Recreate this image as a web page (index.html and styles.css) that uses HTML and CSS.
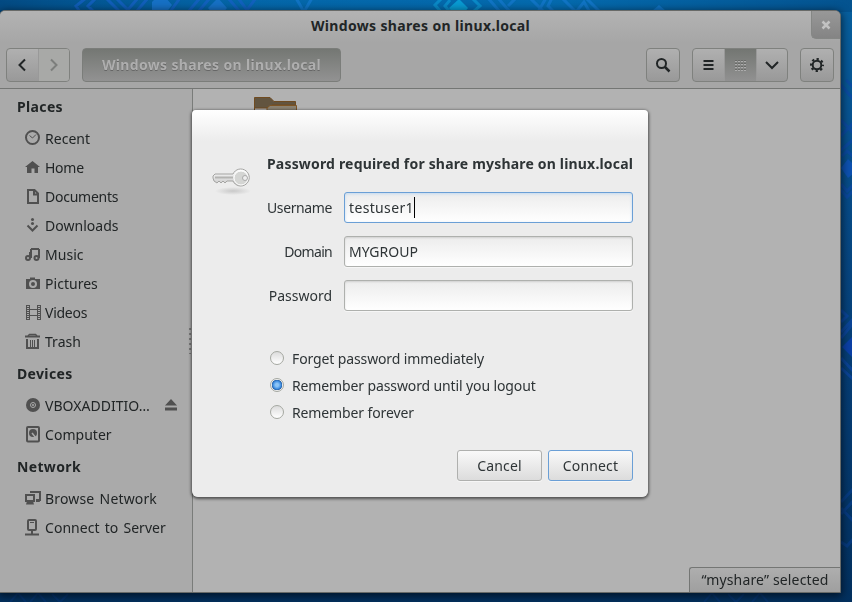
FILE: index.html
```html
<!DOCTYPE html>
<html lang="en">
<head>
<meta charset="utf-8">
<title>Windows shares on linux.local</title>
<link rel="stylesheet" href="styles.css">
</head>
<body>
<svg class="wallpaper" viewBox="0 0 852 602" aria-hidden="true">
  <defs>
    <linearGradient id="sky" x1="0" y1="0" x2="0" y2="1"><stop offset="0" stop-color="#07609f"/><stop offset=".25" stop-color="#074f8d"/><stop offset=".6" stop-color="#063e76"/><stop offset="1" stop-color="#03305e"/></linearGradient>
    <linearGradient id="glow"><stop offset="0" stop-color="#003c70" stop-opacity=".6"/><stop offset=".3" stop-color="#0070b8" stop-opacity=".4"/><stop offset=".65" stop-color="#0074bc" stop-opacity=".5"/><stop offset="1" stop-color="#004680" stop-opacity=".5"/></linearGradient>
  </defs>
  <rect width="852" height="602" fill="url(#sky)"/>
  <rect width="852" height="12" fill="url(#glow)"/>
  <g fill="none" stroke="#1560c4" stroke-width="3" opacity=".75">
    <path d="M86-2l-10 8 4 6M96-2l-8 8 6 6M106-2l14 14M116-2l14 14M126 12l12-14M136 12l12-14M180-2l-10 14M188 12l12-14M198 12l12-14M228-2l12 14M238-2l9 12 9-12"/>
    <path stroke="#1478cc" d="M296-2l8 14 8-14M488-2l12 14M498-2l12 14M516-2l-8 8M530-2l14 14M546-2l-8 14M552-2l-4 8 6 6M562-2l14 14M576 12l8-10 8 14M586-2l14 14M652 13l7-6 7 6"/>
    <path stroke="#0c94d0" d="M442-2l-7 7 6 7M450 0l-5 6 5 6M472-2l8 8-7 6"/>
  </g>
  <path d="M152 12V2l4-4h10l6 7-6 8zM208 8l10-10 9 10-4 5h-11z" fill="#1670c4"/>
  <path d="M449 8l10-9 9 9-4 5h-11z" fill="#089ad2"/>
  <g fill="none" stroke="#0e48a8" stroke-width="3" opacity=".65">
    <path d="M840 84l14 16M846 80l8 8M841 120l13 14M841 136l13-14M841 150l13-11M842 156l5-5 7 6M841 184l6 7 7-7M841 190l6 7 7-7M841 310l6 6-6 6M841 338l13-16M841 332l13-14M841 358l13 14M841 368l13 12"/>
    <path opacity=".6" d="M841 502l13-14M841 514l13-14M841 508l13 14M841 542l6 4 7-8"/>
    <path stroke="#073678" stroke-width="2" d="M10 602l8-9 8 9M30 602l8-9 8 9M52 594l8 8 8-8M704 602l8-9 8 9M728 594l8 8 8-8M752 602l8-9 8 9"/>
  </g>
  <path d="M841 168l7-9 6 6v8l-6 5z" fill="#0d51b0"/>
  <path d="M842 347l10-10v20z" fill="#0b40a6"/>
</svg>
<div class="window">
  <header class="titlebar"><h1>Windows shares on linux.local</h1>
    <button class="close" aria-label="Close"><svg width="10" height="10" viewBox="0 0 10 10"><path d="M1.500 1.500l7 7M8.500 1.500l-7 7" stroke="#c2c2c2" stroke-width="2.500"/></svg></button>
  </header>
  <div class="toolbar">
    <div class="group nav">
      <button aria-label="Back"><svg width="16" height="16" viewBox="0 0 16 16"><path d="M10 2.500L4.500 8l5.500 5.500"/></svg></button>
      <button class="off" aria-label="Forward"><svg width="16" height="16" viewBox="0 0 16 16"><path d="M5 2.500L10.500 8 5 13.500"/></svg></button>
    </div>
    <button class="location"><span>Windows shares on linux.local</span></button>
    <div class="spacer"></div>
    <div class="group"><button aria-label="Search"><svg width="16" height="16" viewBox="0 0 16 16"><circle cx="6.500" cy="6.500" r="4.500"/><path stroke-width="2.500" d="M10 10l4.500 4.500"/></svg></button></div>
    <div class="group views">
      <button aria-label="List"><svg width="16" height="16" viewBox="0 0 16 16"><path d="M2.500 4h10M2.500 8h10M2.500 12h10"/></svg></button>
      <button class="on" aria-label="Grid"><svg width="16" height="16" viewBox="0 0 16 16" shape-rendering="crispEdges"><path d="M2 4h11M2 7h11M2 10h11M2 13h11" stroke="#acacac" stroke-width="1" stroke-dasharray="2 1"/><path d="M2 3h11M2 6h11M2 9h11M2 12h11" stroke="#6a6c69" stroke-width="1" stroke-dasharray="2 1"/></svg></button>
      <button aria-label="View options"><svg width="16" height="16" viewBox="0 0 16 16"><path d="M2 5l6 6 6-6"/></svg></button>
    </div>
    <div class="group"><button aria-label="Settings"><svg width="16" height="16" viewBox="0 0 16 16"><circle cx="8" cy="8" r="4.300"/><circle cx="8" cy="8" r="6" stroke-dasharray="2.350 2.362" stroke-dashoffset="1.170"/></svg></button></div>
  </div>
  <div class="body">
    <aside class="sidebar">
      <h2>Places</h2>
      <ul>
        <li><svg viewBox="0 0 16 16"><circle cx="7.500" cy="6.500" r="6.500"/><path stroke-width="1" d="M4.500 4.500L7.500 7 11 3.500"/></svg><span>Recent</span></li>
        <li><svg viewBox="0 0 16 16"><path class="fill" d="M7.500 1L15 7h-2v6H9.500V8.500h-3V13H2V7H0z"/></svg><span class="tight">Home</span></li>
        <li><svg viewBox="0 0 16 16"><path d="M3 1h6.500L13 4.500V14H3zM9 1v4.500h4"/></svg><span class="tight">Documents</span></li>
        <li><svg viewBox="0 0 16 16"><circle class="fill" cx="7.500" cy="1.500" r="1.500"/><circle class="fill" cx="7.500" cy="5.500" r="1.500"/><path d="M2.500 7.500l5 5 5-5"/></svg><span>Downloads</span></li>
        <li><svg viewBox="0 0 16 16"><circle cx="3" cy="11" r="2"/><circle cx="11.500" cy="11" r="2"/><path d="M5 11V5M6 2h8M6 2v9M14 2v9"/></svg><span>Music</span></li>
        <li><svg viewBox="0 0 16 16"><path class="fill" fill-rule="evenodd" d="M1 3h4V1.500h5V3h5v10H1zM8 4a4 4 0 1 0 0 8 4 4 0 1 0 0-8zm0 2a2 2 0 1 1 0 4 2 2 0 1 1 0-4z"/></svg><span>Pictures</span></li>
        <li><svg viewBox="0 0 16 16"><path stroke-width="1" d="M1.500 0v15M4.500 0v15M12.500 0v15M15.500 0v15M4 4.500h9M4 10.500h9"/><path stroke-dasharray="1 1" d="M3 0v15M14 0v15"/></svg><span class="tight">Videos</span></li>
        <li><svg viewBox="0 0 16 16"><path d="M0 2.500h15M2 5v9h11V5"/><path stroke-width="1.500" d="M3 2l1.500-1.500h6L12 2"/><path stroke-width="1" d="M5.500 6v7M7.500 6v7M9.500 6v7"/></svg><span>Trash</span></li>
      </ul>
      <h2>Devices</h2>
      <ul>
        <li><svg viewBox="0 0 16 16"><circle class="fill" cx="8" cy="7" r="7"/><circle cx="8" cy="7" r="2.500" fill="#505050" stroke="#aaa" stroke-width="1"/><circle cx="8" cy="7" r="1" fill="#aaa" stroke="none"/></svg><span class="disc">VBOXADDITIO…</span><svg class="eject" viewBox="0 0 14 14"><path class="fill" d="M7 0l6 6.500H1zM1 8.500h12v3H1z"/></svg></li>
        <li><svg viewBox="0 0 16 16"><rect x="2" y="0" width="12" height="14.500" rx="1"/><circle class="fill" cx="8" cy="6" r="4"/><path stroke="#aaa" stroke-width="1.500" d="M7 6l4 5"/></svg><span>Computer</span></li>
      </ul>
      <h2>Network</h2>
      <ul>
        <li><svg viewBox="0 0 16 16"><path d="M6 2V1h9v8h-3M1 4h8v6H1z"/><path class="fill" d="M2 10h6l1 3.500H1zM11 8h3l1 3h-4z"/></svg><span class="browse">Browse Network</span></li>
        <li><svg viewBox="0 0 16 16"><rect x="3" y="0" width="8" height="10" rx="1"/><path stroke-width="1" d="M5 2.500h4"/><path d="M7 10v4M0 14.500h14"/></svg><span>Connect to Server</span></li>
      </ul>
      <i class="grip"></i>
    </aside>
    <main class="files">
      <svg class="folder" width="44" height="40" viewBox="0 0 44 40"><path d="M.5 40V1.500H16l4 4h21.500V9H18l-3 3H.5" fill="#62543f" stroke="#704b20"/><path d="M13 40V12l3-2.500h26.500V40" fill="#8b8272" stroke="#7d5424"/></svg>
      <div class="status"><span>“myshare” selected</span></div>
    </main>
  </div>
</div>
<form class="dialog" role="dialog">
  <svg class="key" width="40" height="30" viewBox="0 0 40 30"><defs><linearGradient id="m" x1="0" y1="0" x2="0" y2="1"><stop offset="0" stop-color="#fff"/><stop offset="1" stop-color="#c5c5c5"/></linearGradient><radialGradient id="s"><stop offset="0" stop-color="#c8c8c8"/><stop offset="1" stop-color="#ececec"/></radialGradient></defs><ellipse cx="21" cy="23" rx="18" ry="4" fill="url(#s)"/><path d="M1 8l2-2h18a8.500 8.500 0 1 1 0 7h-6l-2 2-2-2-2 2-2-2-2 2-3-2-1-3z" fill="url(#m)" stroke="#a4a4a2"/><path d="M3 8.500h18v2H3z" fill="#b4b4b2"/><circle cx="29" cy="10" r="7" fill="#d4d5d3" stroke="#fff"/><circle cx="33" cy="10" r="2.500" fill="#eee" stroke="#aaa"/></svg>
  <div class="content">
    <h3>Password required for share myshare on linux.local</h3>
    <div class="fields">
      <label class="user">Username</label><div class="entry focus"><span class="wide">testuser1</span><i class="caret"></i></div>
      <label class="domain">Domain</label><div class="entry"><span class="caps">MYGROUP</span></div>
      <label>Password</label><div class="entry"></div>
    </div>
    <div class="choices">
      <label><i class="radio"></i><span>Forget password immediately</span></label>
      <label><i class="radio checked"></i><span>Remember password until you logout</span></label>
      <label><i class="radio"></i><span>Remember forever</span></label>
    </div>
    <div class="actions"><button type="button">Cancel</button><button type="button" class="primary">Connect</button></div>
  </div>
</form>
</body>
</html>
```
FILE: styles.css
```css
* { box-sizing: border-box; }
body { margin: 0; width: 852px; height: 602px; overflow: hidden; background: #063a72; color: #212526; font: 14px/20px "Noto Sans", sans-serif; }
h1, h2, h3, ul { margin: 0; padding: 0; list-style: none; }
h1, h2, h3 { font-size: 14px; font-weight: 700; line-height: 20px; }
h1 { letter-spacing: .35px; }
h2 { letter-spacing: .35px; }
h3 { letter-spacing: .18px; }
button { font: inherit; color: inherit; margin: 0; padding: 0; border: 0; background: none; }
svg { display: block; flex: none; }
.wallpaper { position: absolute; inset: 0; width: 852px; height: 602px; }

.window { position: absolute; left: -1px; top: 10px; width: 842px; height: 583px; border: 1px solid #686a68; border-radius: 6px 6px 0 0; background: #aaa; display: flex; flex-direction: column; overflow: hidden; box-shadow: 0 2px 9px 1px rgba(0,0,0,.6); }
.titlebar { height: 32px; flex: none; display: flex; justify-content: center; padding: 5px 0 0 1px; background: linear-gradient(#b3b3b3, #a6a6a6); position: relative; }
.close { position: absolute; right: 0; top: 0; width: 29px; height: 28px; border: 1px solid #858785; border-width: 0 0 1px 1px; border-radius: 0 0 0 5px; background: linear-gradient(#989898, #848484); display: grid; place-items: center; }
.toolbar { height: 46px; flex: none; display: flex; padding: 5px 6px 7px 6px; background: #a6a6a6; border-bottom: 1px solid #747674; }
.group { height: 34px; display: flex; border: 1px solid #7f817e; border-radius: 4px; overflow: hidden; background: linear-gradient(#b0b0b0, #999); margin-left: 12px; }
.group.nav { margin-left: 0; }
.group button { width: 32px; display: grid; place-items: center; }
.nav button { width: 31px; }
.nav button + button, .views button + button { border-left: 1px solid #999; }
.group.views button { width: 31px; }
.group.views .on { width: 32px; background: linear-gradient(#737672, #919191); }
.nav .off { background: #a8a9a7; }
.group svg { fill: none; stroke: #212526; stroke-width: 2; }
.group .off svg { stroke: #7c7e7c; }
.location { width: 259px; height: 34px; margin-left: 12px; border: 1px solid #7b7d7a; border-radius: 4px; background: linear-gradient(#747773, #929292); color: #aeaeae; font-weight: 700; letter-spacing: .35px; text-shadow: 0 1px #666; }
.spacer { flex: 1; }
.body { display: flex; flex: 1; min-height: 0; }
.sidebar { width: 193px; border-right: 1px solid #7a7c7a; padding: 8px 0 0 17px; position: relative; word-spacing: 1.5px; letter-spacing: .03px; }
.sidebar ul { padding: 7px 0 8px 8px; }
.sidebar li { display: flex; align-items: center; height: 29px; }
.sidebar .tight { letter-spacing: -.25px; }
.sidebar .browse { letter-spacing: .15px; }
.sidebar li svg { width: 16px; height: 16px; margin-right: 4px; fill: none; stroke: #505050; stroke-width: 2; overflow: visible; }
.sidebar .fill { fill: #505050; stroke: none; }
.sidebar li .eject { width: 14px; height: 14px; margin: 0 14px 0 auto; }
.grip { position: absolute; left: 189px; top: 239px; width: 2px; height: 26px; background: repeating-linear-gradient(#777 0 2px, transparent 2px 5px); }
.files { flex: 1; background: #b2b2b2; display: flex; flex-direction: column; justify-content: space-between; }
.folder { margin: 7px 0 0 61px; }
.status { align-self: flex-end; width: 151px; height: 25px; border: 1px solid #747674; border-width: 1px 0 0 1px; border-radius: 3px 0 0; background: linear-gradient(#aeaeae, #9f9f9f); text-align: center; line-height: 24px; white-space: nowrap; letter-spacing: .15px; }

.dialog { position: absolute; left: 192px; top: 110px; width: 456px; height: 387px; border-radius: 4px 4px 6px 6px; background: linear-gradient(#fff, #ececec 31px); box-shadow: 0 1px 3px 1px rgba(0,0,0,.55); display: flex; padding: 44px 15px 0 19px; color: #2e3436; }
.key { margin: 14px 15px 0 1px; }
.content { flex: 1; min-width: 0; }
.dialog h3 { white-space: nowrap; }
.fields { display: grid; grid-template-columns: 65px 289px; grid-auto-rows: 31px; gap: 13px 12px; margin-top: 18px; }
.fields label { text-align: right; line-height: 32px; white-space: nowrap; }
.fields .user { letter-spacing: -.38px; }
.fields .domain { letter-spacing: -.7px; }
.entry { height: 31px; border: 1px solid #aeb0ad; border-radius: 3px; padding: 0 4px; background: linear-gradient(#ececec, #fff); box-shadow: inset 0 1px 2px rgba(0,0,0,.12), 0 1px #f6f6f6; display: flex; align-items: center; }
.entry.focus { border-color: #6a9fd6; box-shadow: inset 0 1px 3px #c3daf1; }
.wide { letter-spacing: .35px; }
.caret { width: 1px; height: 21px; background: #000; }
.choices { margin: 34px 0 0 3px; letter-spacing: -.12px; }
.choices label { display: flex; height: 27px; align-items: center; }
.radio { width: 14px; height: 14px; margin: -2px 8px 0 0; border: 1px solid #a5a8a1; border-radius: 50%; background: linear-gradient(#dcdcdc, #fff); }
.radio.checked { background: radial-gradient(circle at 50% 50%, #8cc4f5 0 1.500px, #4b98e8 3.500px, #2765ad 5px, #eee 5.500px); }
.actions { display: flex; justify-content: flex-end; gap: 6px; margin-top: 24px; }
.actions button { width: 85px; height: 31px; border: 1px solid #afb0ae; border-radius: 3px; background: linear-gradient(#f9f9f9, #dcdcdc); box-shadow: 0 1px #f6f6f6; letter-spacing: .15px; }
.actions .primary { border-color: #6a9fd6; }
```
